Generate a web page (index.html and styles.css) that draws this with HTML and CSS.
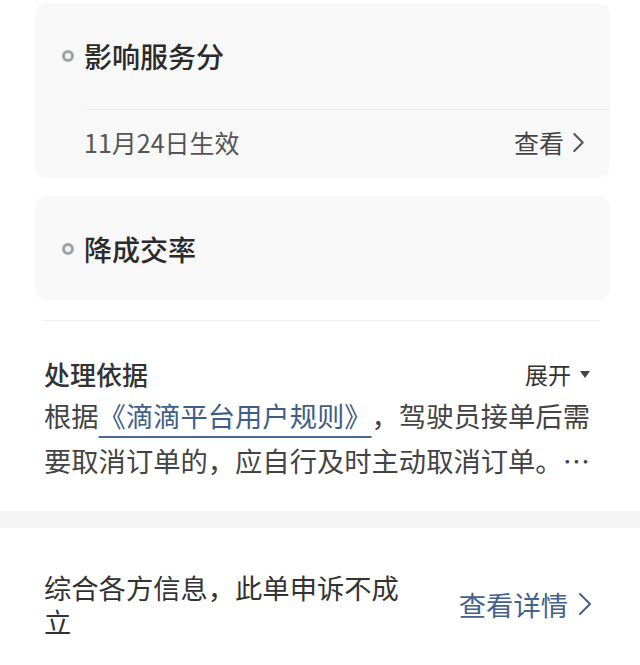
FILE: index.html
```html
<!DOCTYPE html>
<html lang="zh-CN">
<head>
    <meta charset="UTF-8">
    <meta name="viewport" content="width=device-width, initial-scale=1.0">
    <title>处理结果</title>
    <link rel="stylesheet" href="styles.css">
</head>
<body>
    <div class="penalty-list">
        <div class="penalty-card">
            <div class="penalty-title">
                <span class="dot"></span>
                <span>影响服务分</span>
            </div>
            <div class="penalty-sub">
                <span class="sub-date">11月24日生效</span>
                <a class="sub-link" href="#">
                    查看
                    <svg class="chevron" viewBox="0 0 12 20" width="13" height="21">
                        <polyline points="2,2 10,10 2,18" fill="none" stroke="currentColor" stroke-width="2" stroke-linecap="round" stroke-linejoin="round"/>
                    </svg>
                </a>
            </div>
        </div>
        <div class="penalty-card">
            <div class="penalty-title">
                <span class="dot"></span>
                <span>降成交率</span>
            </div>
        </div>
    </div>

    <div class="basis">
        <div class="basis-head">
            <span class="basis-title">处理依据</span>
            <span class="basis-toggle">展开<span class="triangle"></span></span>
        </div>
        <p class="basis-text">根据<a href="#" class="rule-link">《滴滴平台用户规则》</a>，驾驶员接单后需要取消订单的，应自行及时主动取消订单。…</p>
    </div>

    <div class="band"></div>

    <div class="result">
        <div class="result-text">综合各方信息，此单申诉不成立</div>
        <a class="result-link" href="#">
            查看详情
            <svg class="chevron" viewBox="0 0 14 24" width="14" height="24">
                <polyline points="2,2 12,12 2,22" fill="none" stroke="currentColor" stroke-width="2" stroke-linecap="round" stroke-linejoin="round"/>
            </svg>
        </a>
    </div>
</body>
</html>
```

FILE: styles.css
```css
body {
    margin: 0;
    padding: 0;
    background: #fff;
    color: #333;
    font-family: "Noto Sans CJK SC", "Noto Sans", sans-serif;
    text-spacing-trim: space-all;
}

a {
    text-decoration: none;
}

.penalty-list {
    padding: 3px 30px 0 35px;
    display: flex;
    flex-direction: column;
    gap: 18px;
}

.penalty-card {
    background: #f8f8f8;
    border-radius: 12px;
    padding: 33px 0 31px 27px;
}

.penalty-card:first-child {
    padding-bottom: 19px;
}

.penalty-title {
    display: flex;
    align-items: center;
    gap: 10px;
    font-size: 28px;
    line-height: 40px;
    font-weight: 500;
    color: #2b2b2b;
}

.dot {
    width: 6px;
    height: 6px;
    border: 3px solid #9ea1a8;
    border-radius: 50%;
    background: #f2f2f3;
    flex-shrink: 0;
}

.penalty-sub {
    margin: 33px 0 0 22px;
    padding: 15px 25px 0 0;
    border-top: 1px solid #ececec;
    display: flex;
    justify-content: space-between;
    align-items: center;
    font-size: 25px;
    line-height: 34px;
}

.sub-date {
    color: #555;
}

.sub-link {
    color: #444;
    display: flex;
    align-items: center;
    gap: 8px;
}

.sub-link .chevron {
    color: #555;
}

.basis {
    margin: 20px 40px 0 43px;
    border-top: 1px solid #eee;
    padding: 34px 5px 0 1px;
}

.basis-head {
    display: flex;
    justify-content: space-between;
    align-items: center;
    line-height: 38px;
}

.basis-title {
    font-size: 26px;
    font-weight: 500;
    color: #333;
}

.basis-toggle {
    font-size: 23px;
    color: #333;
    display: flex;
    align-items: center;
    gap: 9px;
    padding-right: 5px;
}

.triangle {
    width: 0;
    height: 0;
    border-left: 5px solid transparent;
    border-right: 5px solid transparent;
    border-top: 7px solid #444;
}

.basis-text {
    margin: 0;
    font-size: 27.3px;
    line-height: 45px;
    color: #444;
}

.rule-link {
    color: #3e5e88;
    text-decoration: underline;
    text-decoration-thickness: 2px;
    text-underline-offset: 9px;
    text-decoration-color: #4a6890;
}

.band {
    height: 17px;
    background: #f5f5f5;
    margin-top: 28px;
}

.result {
    display: flex;
    justify-content: space-between;
    align-items: center;
    padding: 42px 48px 0 44px;
}

.result-text {
    width: 370px;
    font-size: 27.3px;
    line-height: 34px;
    color: #333;
}

.result-link {
    color: #43628c;
    font-size: 27.3px;
    display: flex;
    align-items: center;
    gap: 10px;
}
```
